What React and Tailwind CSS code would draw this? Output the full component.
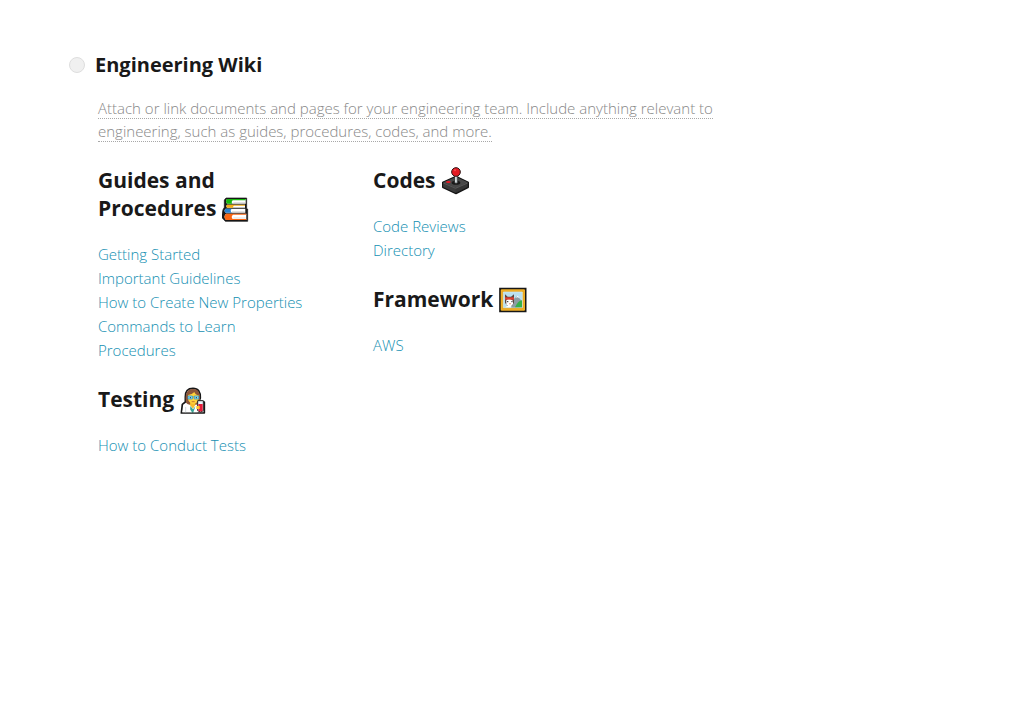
const emojiClass = "-my-1 inline-block h-7 w-7 shrink-0 align-[-3px]";

function Books() {
  return (
    <svg className={emojiClass} viewBox="17 12 84 84" aria-hidden="true">
      <path d="M29 21H91V54H94V91H27L17 80V70L20 56L24 49V27Z" fill="#171717" stroke="#171717" strokeWidth="2" strokeLinejoin="round" />
      <path d="M32 24H88V38H32Q26 31 32 24Z" fill="#fff" />
      <path d="M32 41H86V50H32Q27 46 32 41Z" fill="#fff" />
      <path d="M28 53H87V65H28Q21 59 28 53Z" fill="#fff" />
      <path d="M29 68H90V87H29Q20 77 29 68Z" fill="#fff" />
      <path d="M32 24H88V28H49Q43 33 48 38H32Q26 31 32 24Z" fill="#16b90d" />
      <path d="M32 41H86V44H53Q48 47 51 50H32Q27 46 32 41Z" fill="#f3ae16" />
      <path d="M28 53H46Q40 59 46 65H28Q21 59 28 53Z" fill="#2780d0" />
      <path d="M29 68H90V71H50Q43 77 49 84H90V87H29Q20 77 29 68Z" fill="#fa6512" />
      <path d="M51 35H86M47 62H85M51 81H88" stroke="#ccc" strokeWidth="2" />
    </svg>
  );
}

function Joystick() {
  return (
    <svg className={emojiClass} viewBox="13 12 84 84" aria-hidden="true">
      <path d="M18 58L58 40L95 58V73L58 92L18 73Z" fill="#343434" stroke="#151515" strokeWidth="4" strokeLinejoin="round" />
      <path d="M20 58L58 42L93 58L58 75Z" fill="#484848" />
      <path d="M20 60L57 76V89L20 72Z" fill="#3b3b3b" />
      <path d="M20 60L57 76L93 60" fill="none" stroke="#666" strokeWidth="2" />
      <ellipse cx="58" cy="59" rx="13" ry="6" fill="#191919" />
      <path d="M54 35H63V59Q58 63 54 59Z" fill="#b9c4c8" stroke="#202020" strokeWidth="2" />
      <path d="M57 37V58" stroke="#fff" strokeWidth="2" />
      <circle cx="58" cy="27" r="13" fill="#e51b24" stroke="#301515" strokeWidth="3" />
      <circle cx="55" cy="22" r="3" fill="#f84b50" />
      <ellipse cx="35" cy="57" rx="7" ry="3" fill="#ec1723" />
    </svg>
  );
}

function FramedPicture() {
  return (
    <svg className={emojiClass} viewBox="12 12 84 84" aria-hidden="true">
      <path d="M15 20H92V88H15Z" fill="#e8a61d" stroke="#171717" strokeWidth="5" />
      <path d="M19 24H88V84H19Z" fill="none" stroke="#f5b52c" strokeWidth="3" />
      <path d="M25 30H82V77H25Z" fill="#b9e0ef" stroke="#d5edf5" strokeWidth="2" />
      <path d="M48 77V58L67 42L81 58V76Z" fill="#8c9da4" />
      <path d="M62 47L68 41L74 48L68 46Z" fill="#fff" />
      <path d="M60 76Q70 55 81 55V76Z" fill="#35b14b" />
      <path d="M31 76Q38 66 53 76Z" fill="#fff" />
      <path d="M30 37L38 44H48L57 37V62L50 72H37L30 62Z" fill="#5d4640" />
      <path d="M34 55L42 49L54 56V66L48 73H39L34 67Z" fill="#fff" />
      <path d="M30 46H57V53H30Z" fill="#dd4032" />
      <path d="M36 59H40M49 59H53" stroke="#292929" strokeWidth="3" />
      <path d="M42 64H48L45 68Z" fill="#e9774f" />
    </svg>
  );
}

function Scientist() {
  return (
    <svg className={emojiClass} viewBox="15 12 84 84" aria-hidden="true">
      <path d="M31 60L22 67L19 93H88V60L72 58L76 48Q77 19 54 19Q30 19 31 45Z" fill="#fff" stroke="#171717" strokeWidth="5" strokeLinejoin="round" />
      <path d="M33 62Q27 21 54 21Q80 21 74 62L65 68H40Z" fill="#8c563a" />
      <path d="M47 58H61V69L54 80L44 68Z" fill="#f5bc2d" />
      <path d="M39 39Q51 38 58 30Q61 39 71 40V51Q68 65 54 66Q41 62 39 51Z" fill="#ffd13b" />
      <path d="M39 42H52V51H39ZM58 42H71V51H58Z" fill="#8cdcf5" stroke="#2191c7" strokeWidth="2" />
      <path d="M52 45H58" stroke="#2191c7" strokeWidth="2" />
      <circle cx="46" cy="47" r="2" fill="#253641" />
      <circle cx="64" cy="47" r="2" fill="#253641" />
      <path d="M50 59H59" stroke="#a74c29" strokeWidth="2" />
      <path d="M46 72L54 82L62 72L60 91H45Z" fill="#3aa595" />
      <path d="M41 67L28 70L22 91H51L42 78ZM63 68L55 91H68V70Z" fill="#fff" />
      <path d="M32 75V91" stroke="#bec5c8" strokeWidth="2" />
      <path d="M68 56H85V86Q77 94 68 86Z" fill="#e7f5fa" stroke="#242424" strokeWidth="3" />
      <path d="M70 66H83V86Q76 91 70 86Z" fill="#e91d3b" />
      <path d="M64 72H74V81H64Z" fill="#ffc630" />
    </svg>
  );
}

function Section({ title, icon, links }) {
  return (
    <section>
      <h2 className="text-[21px] leading-7 font-bold text-[#191919]">
        {title} {icon}
      </h2>
      <ul className="mt-5 text-[15px] leading-6 font-[350]">
        {links.map((label) => (
          <li key={label}>
            <a href="#" className="text-[#148fb2] hover:underline">{label}</a>
          </li>
        ))}
      </ul>
    </section>
  );
}

export default function App() {
  return (
    <main className="min-h-screen bg-white px-[69px] pt-[49px] font-['Open_Sans','Noto_Sans',sans-serif]">
      <header className="flex items-center gap-[10px]">
        <span className="h-4 w-4 rounded-full border border-[#dedede] bg-[#f0f0f0]" />
        <h1 className="text-xl leading-8 font-bold text-[#191919]">Engineering Wiki</h1>
      </header>
      <div className="pl-[29px]">
        <p className="mt-4 max-w-[640px] text-[15px] leading-[23px] font-light text-[#888888]">
          <span className="border-b border-dotted border-[#a8a8a8]">
            Attach or link documents and pages for your engineering team. Include anything relevant to engineering, such as guides, procedures, codes, and more.
          </span>
        </p>
        <div className="mt-[23px] grid max-w-[550px] grid-cols-2">
          <div className="flex flex-col gap-[23px] pr-14">
            <Section
              title="Guides and Procedures"
              icon={<Books />}
              links={["Getting Started", "Important Guidelines", "How to Create New Properties", "Commands to Learn", "Procedures"]}
            />
            <Section title="Testing" icon={<Scientist />} links={["How to Conduct Tests"]} />
          </div>
          <div className="flex flex-col gap-[23px]">
            <Section title="Codes" icon={<Joystick />} links={["Code Reviews", "Directory"]} />
            <Section title="Framework" icon={<FramedPicture />} links={["AWS"]} />
          </div>
        </div>
      </div>
    </main>
  );
}
